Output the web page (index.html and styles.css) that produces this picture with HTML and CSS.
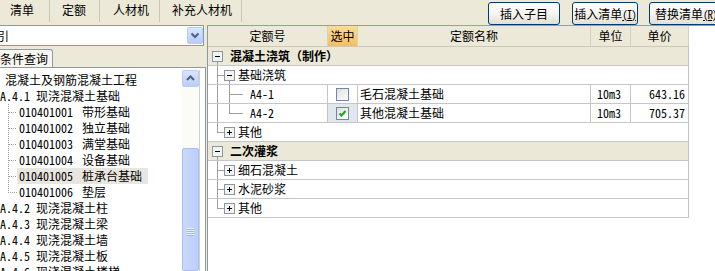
FILE: index.html
```html
<!DOCTYPE html>
<html>
<head>
<meta charset="utf-8">
<link rel="stylesheet" href="styles.css">
<title>定额查询</title>
</head>
<body>
<div class="top">
  <div class="tabs">
    <div class="tab t1">清单</div>
    <div class="tab t2">定额</div>
    <div class="tab t3">人材机</div>
    <div class="tab t4">补充人材机</div>
  </div>
  <div class="btns">
    <button class="btn b1">插入子目</button>
    <button class="btn b2">插入清单<u>(I)</u></button>
    <button class="btn b3">替换清单<u>(R)</u></button>
  </div>
</div>

<div class="main">
  <div class="left">
    <div class="combo">
      <span class="combo-text">索引</span>
      <span class="drop"><svg width="14" height="15" viewBox="0 0 14 15"><path d="M3.5 5.5L7 9L10.5 5.5" fill="none" stroke="#4d6185" stroke-width="2"/></svg></span>
    </div>
    <div class="ltabs"><div class="ltab">条件查询</div></div>
    <div class="panel">
      <div class="tree">
        <div class="ti root">混凝土及钢筋混凝土工程</div>
        <div class="ti"><span class="num">A.4.1</span>现浇混凝土基础</div>
        <div class="ti"><svg class="tl" width="17" height="16"><path d="M8.5 0V16M9 8.5H17"/></svg><span class="lbl"><span class="code">010401001</span>带形基础</span></div>
        <div class="ti"><svg class="tl" width="17" height="16"><path d="M8.5 0V16M9 8.5H17"/></svg><span class="lbl"><span class="code">010401002</span>独立基础</span></div>
        <div class="ti"><svg class="tl" width="17" height="16"><path d="M8.5 0V16M9 8.5H17"/></svg><span class="lbl"><span class="code">010401003</span>满堂基础</span></div>
        <div class="ti"><svg class="tl" width="17" height="16"><path d="M8.5 0V16M9 8.5H17"/></svg><span class="lbl"><span class="code">010401004</span>设备基础</span></div>
        <div class="ti"><svg class="tl" width="17" height="16"><path d="M8.5 0V16M9 8.5H17"/></svg><span class="lbl sel"><span class="code">010401005</span>桩承台基础</span></div>
        <div class="ti"><svg class="tl" width="17" height="16"><path d="M8.5 0V8.5H17"/></svg><span class="lbl"><span class="code">010401006</span>垫层</span></div>
        <div class="ti"><span class="num">A.4.2</span>现浇混凝土柱</div>
        <div class="ti"><span class="num">A.4.3</span>现浇混凝土梁</div>
        <div class="ti"><span class="num">A.4.4</span>现浇混凝土墙</div>
        <div class="ti"><span class="num">A.4.5</span>现浇混凝土板</div>
        <div class="ti"><span class="num">A.4.6</span>现浇混凝土楼梯</div>
      </div>
      <div class="vs">
        <div class="vs-up"><svg width="15" height="15" viewBox="0 0 15 15"><path d="M4 9L7.5 5.5L11 9" fill="none" stroke="#4d6185" stroke-width="2"/></svg></div>
        <div class="vs-track"></div>
        <div class="vs-thumb"><div class="grip"></div></div>
      </div>
    </div>
  </div>

  <div class="grid">
    <div class="ghead">
      <div class="hc w1">定额号</div>
      <div class="hc w2"><span class="hot">选中</span></div>
      <div class="hc w3">定额名称</div>
      <div class="hc w4">单位</div>
      <div class="hc w5">单价</div>
    </div>

    <div class="row grp">
      <svg class="tg" width="22" height="18"><path class="ln" d="M9.5 15V18"/><rect class="bx" x="4.5" y="4.5" width="10" height="10"/><path class="sg" d="M7 9.5H12"/></svg>
      <span>混凝土浇筑（制作）</span>
    </div>
    <div class="row">
      <svg class="tg" width="30" height="18"><path class="ln" d="M9.5 0V18M10 9.5H16M21.5 15V18"/><rect class="bx" x="16.5" y="4.5" width="10" height="10"/><path class="sg" d="M19 9.5H24"/></svg>
      <span>基础浇筑</span>
    </div>
    <div class="row data">
      <div class="c w1"><svg class="tg" width="42" height="18"><path class="ln" d="M9.5 0V18M21.5 0V18M22 9.5H35"/></svg>A4-1</div>
      <div class="c w2 mid"><span class="cb"></span></div>
      <div class="c w3 name">毛石混凝土基础</div>
      <div class="c w4 unit">10m3</div>
      <div class="c w5 price">643.16</div>
    </div>
    <div class="row data">
      <div class="c w1"><svg class="tg" width="42" height="18"><path class="ln" d="M9.5 0V18M21.5 0V9.5M22 9.5H35"/></svg>A4-2</div>
      <div class="c w2 mid focus"><span class="cb"><svg width="11" height="11" viewBox="0 0 11 11"><path d="M2.5 5.5L4.5 7.5L8.5 3" fill="none" stroke="#21a121" stroke-width="2"/></svg></span></div>
      <div class="c w3 name">其他混凝土基础</div>
      <div class="c w4 unit">10m3</div>
      <div class="c w5 price">705.37</div>
    </div>
    <div class="row">
      <svg class="tg" width="30" height="18"><path class="ln" d="M9.5 0V9.5M10 9.5H16"/><rect class="bx" x="16.5" y="4.5" width="10" height="10"/><path class="sg" d="M19 9.5H24M21.5 7V12"/></svg>
      <span>其他</span>
    </div>

    <div class="row grp">
      <svg class="tg" width="22" height="18"><path class="ln" d="M9.5 15V18"/><rect class="bx" x="4.5" y="4.5" width="10" height="10"/><path class="sg" d="M7 9.5H12"/></svg>
      <span>二次灌浆</span>
    </div>
    <div class="row">
      <svg class="tg" width="30" height="18"><path class="ln" d="M9.5 0V18M10 9.5H16"/><rect class="bx" x="16.5" y="4.5" width="10" height="10"/><path class="sg" d="M19 9.5H24M21.5 7V12"/></svg>
      <span>细石混凝土</span>
    </div>
    <div class="row">
      <svg class="tg" width="30" height="18"><path class="ln" d="M9.5 0V18M10 9.5H16"/><rect class="bx" x="16.5" y="4.5" width="10" height="10"/><path class="sg" d="M19 9.5H24M21.5 7V12"/></svg>
      <span>水泥砂浆</span>
    </div>
    <div class="row">
      <svg class="tg" width="30" height="18"><path class="ln" d="M9.5 0V9.5M10 9.5H16"/><rect class="bx" x="16.5" y="4.5" width="10" height="10"/><path class="sg" d="M19 9.5H24M21.5 7V12"/></svg>
      <span>其他</span>
    </div>
  </div>
</div>
</body>
</html>
```

FILE: styles.css
```css
* {
    box-sizing: border-box;
}
body {
    margin: 0;
    width: 715px;
    height: 271px;
    overflow: hidden;
    background: #ece9d8;
    color: #000;
    font-family: "Noto Sans Mono CJK SC", "Noto Sans CJK SC", "DejaVu Sans", sans-serif;
    font-size: 12px;
    line-height: 1;
}

/* top strip: tabs and buttons */
.top {
    display: flex;
    height: 25px;
}
.tabs {
    display: flex;
    height: 22px;
}
.tab {
    height: 22px;
    line-height: 20px;
    border-right: 1px solid #cbc7b4;
    white-space: nowrap;
}
.t1 { width: 50px; padding-left: 10px; }
.t2 { width: 50px; padding-left: 12px; }
.t3 { width: 60px; padding-left: 13px; }
.t4 { width: 82px; padding-left: 12px; }

.btns {
    display: flex;
    margin-left: 246px;
    padding-top: 2px;
}
.btn {
    flex: none;
    height: 23px;
    padding: 0;
    font: inherit;
    color: #000;
    white-space: nowrap;
    overflow: hidden;
    border: 1px solid #003c74;
    border-radius: 3px;
    background: linear-gradient(#ffffff, #f4f3ee 55%, #e2dfd4);
}
.btn u {
    font-size: 11px;
    letter-spacing: -1px;
}
.b1 { width: 72px; }
.b2 { width: 66px; margin-left: 12px; }
.b3 { width: 74px; margin-left: 11px; text-align: left; padding-left: 5px; }

/* main area */
.main {
    display: flex;
    height: 246px;
}
.left {
    width: 207px;
    flex: none;
    display: flex;
    flex-direction: column;
}
.combo {
    display: flex;
    align-items: center;
    width: 204px;
    height: 21px;
    background: #fff;
    border: 1px solid #7f9db9;
    border-left: 0;
    overflow: hidden;
}
.combo-text {
    flex: 1;
    margin-left: -15px;
    white-space: nowrap;
}
.drop {
    display: flex;
    align-items: center;
    justify-content: center;
    width: 16px;
    height: 17px;
    border: 1px solid #b9cdf7;
    border-radius: 2px;
    background: linear-gradient(#dbe6fd, #b7cbf7);
}

.ltabs {
    display: flex;
    height: 18px;
    margin-top: 3px;
}
.ltab {
    width: 53px;
    height: 18px;
    line-height: 17px;
    white-space: nowrap;
    overflow: hidden;
    background: #f7f6f1;
    border-top: 1px solid #919b9c;
    border-right: 1px solid #919b9c;
    border-radius: 0 3px 0 0;
}

.panel {
    flex: 1;
    display: flex;
    width: 206px;
    padding-right: 5px;
    overflow: hidden;
    background: #fff;
    border-top: 1px solid #919b9c;
    border-right: 1px solid #919b9c;
}
.tree {
    flex: 1;
    padding-top: 4px;
    overflow: hidden;
}
.ti {
    display: flex;
    align-items: center;
    height: 16px;
    white-space: nowrap;
}
.ti.root {
    padding-left: 5px;
}
.num {
    width: 36px;
    flex: none;
}
.code {
    width: 63px;
    flex: none;
}
.tl {
    flex: none;
}
.tl path {
    fill: none;
    stroke: #9a9a9a;
    stroke-dasharray: 1 1;
    shape-rendering: crispEdges;
}
.lbl {
    display: flex;
    align-items: center;
    height: 16px;
    padding: 0 6px 0 2px;
}
.lbl.sel {
    background: #e8e6de;
}

.vs {
    width: 18px;
    margin-top: 2px;
    display: flex;
    flex-direction: column;
    background: #fbfbf8;
    border-right: 1px solid #d0d0d0;
}
.vs-up {
    height: 17px;
    width: 17px;
    display: flex;
    align-items: center;
    justify-content: center;
    border: 1px solid #b9cdf7;
    border-radius: 2px;
    background: linear-gradient(#dbe6fd, #bacdf7);
}
.vs-track {
    height: 61px;
}
.vs-thumb {
    flex: 1;
    width: 17px;
    border: 1px solid #a9bef2;
    border-radius: 2px;
    background: linear-gradient(90deg, #c9d8fc, #bccffb);
    padding-top: 79px;
}
.grip {
    width: 7px;
    height: 8px;
    margin: 0 auto;
    background: repeating-linear-gradient(#eef3fe 0 1px, #9fb5ea 1px 2px);
}

/* grid */
.grid {
    flex: 1;
    overflow: hidden;
    background: #fff;
    border-top: 1px solid #8ea0b5;
    border-left: 1px solid #8d98a4;
}
.ghead {
    display: flex;
    width: 481px;
    height: 21px;
    background: #ece9d8;
    border-bottom: 1px solid #cdc9b7;
}
.hc {
    display: flex;
    align-items: center;
    justify-content: center;
    height: 20px;
    border-right: 1px solid #d6d2c2;
}
.hot {
    display: flex;
    align-items: center;
    height: 20px;
    padding: 0 2px;
    background: linear-gradient(#fbdb98, #f3bd62);
}
.w1 { width: 120px; }
.w2 { width: 30px; }
.w3 { width: 233px; }
.w4 { width: 40px; }
.w5 { width: 57px; }
.ghead .w5 { width: 58px; }

.row {
    display: flex;
    align-items: center;
    width: 481px;
    height: 19px;
    white-space: nowrap;
    border-bottom: 1px solid #c6c6c6;
    border-right: 1px solid #c6c6c6;
}
.row.grp {
    background: #ebe8d8;
    font-weight: bold;
}
.row.data {
    align-items: stretch;
}
.tg {
    flex: none;
}
.tg .ln {
    fill: none;
    stroke: #a0a0a0;
    shape-rendering: crispEdges;
}
.tg .bx {
    fill: #f3f3ef;
    stroke: #8a96a6;
    shape-rendering: crispEdges;
}
.tg .sg {
    fill: none;
    stroke: #000;
    shape-rendering: crispEdges;
}
.c {
    display: flex;
    align-items: center;
    height: 18px;
    border-right: 1px solid #c6c6c6;
}
.c.w5 {
    border-right: 0;
}
.mid {
    justify-content: center;
}
.focus {
    background: #e2e6ee;
}
.name {
    padding-left: 2px;
}
.unit {
    padding-left: 6px;
}
.price {
    justify-content: flex-end;
    padding-right: 3px;
}
.cb {
    display: flex;
    align-items: center;
    justify-content: center;
    width: 13px;
    height: 13px;
    border: 1px solid #6f88a9;
    background: linear-gradient(135deg, #dfded8, #ffffff);
}
```
